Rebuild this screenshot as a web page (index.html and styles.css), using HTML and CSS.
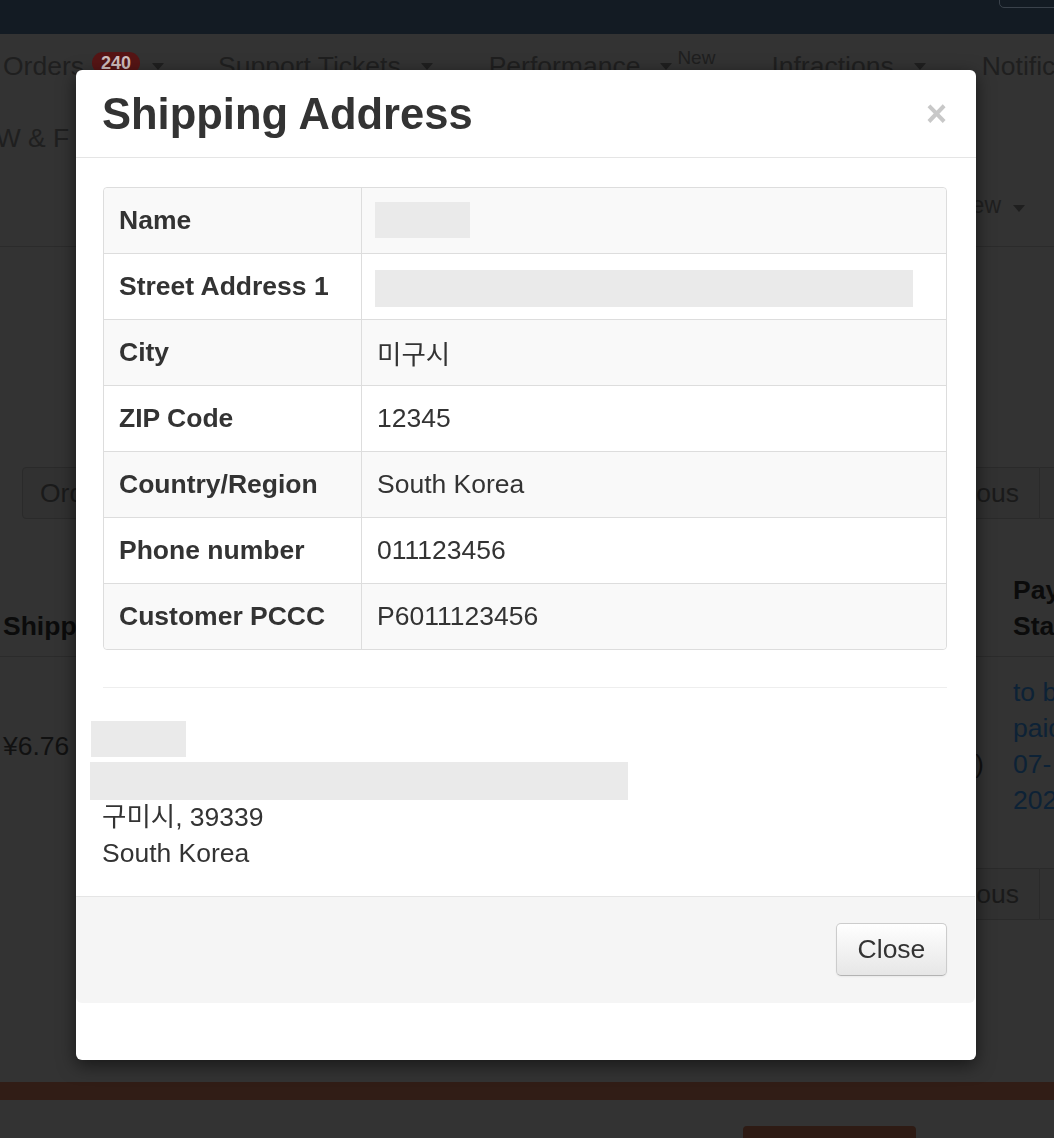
FILE: index.html
```html
<!DOCTYPE html>
<html lang="en">
<head>
<meta charset="utf-8">
<title>Shipping Address</title>
<link rel="stylesheet" href="styles.css">
</head>
<body>
<div class="page">
  <header class="topbar"><div class="search"></div></header>
  <nav class="nav">
    <div class="nav-row">
      <span class="nav-item nav-first">Orders<span class="badge">240</span><span class="caret caret-tight"></span></span>
      <span class="nav-item">Support Tickets<span class="caret"></span></span>
      <span class="nav-item">Performance<span class="caret"></span><sup class="new">New</sup></span>
      <span class="nav-item">Infractions<span class="caret"></span></span>
      <span class="nav-item">Notifications</span>
    </div>
    <div class="nav-row2">BW &amp; F</div>
    <div class="nav-row3">Overview<span class="caret"></span></div>
  </nav>
  <main class="content">
    <div class="toolbar">
      <button class="btn-dim">Orders</button>
      <div class="pager"><button class="btn-dim pg-prev">Previous</button><button class="btn-dim pg-num">1</button></div>
    </div>
    <div class="grid-head">
      <div class="col-a">Shipping Fee</div>
      <div class="col-b"></div>
      <div class="col-c"></div>
      <div class="col-d">Payment<br>Status</div>
    </div>
    <div class="grid-row">
      <div class="col-a">¥6.76</div>
      <div class="col-b"></div>
      <div class="col-c paren">)</div>
      <div class="col-d links">to be<br>paid<br>07-<br>2023</div>
    </div>
    <div class="toolbar toolbar-end">
      <div class="pager"><button class="btn-dim pg-prev">Previous</button><button class="btn-dim pg-num">1</button></div>
    </div>
    <div class="orange-bar"></div>
    <div class="brown-btn"></div>
  </main>
</div>

<div class="modal" role="dialog" aria-labelledby="modal-title">
  <div class="modal-header">
    <h2 id="modal-title">Shipping Address</h2>
    <span class="close">×</span>
  </div>
  <div class="modal-body">
    <table class="addr-table">
      <tbody>
        <tr><th>Name</th><td><span class="redact redact-name"></span></td></tr>
        <tr><th>Street Address 1</th><td><span class="redact redact-street"></span></td></tr>
        <tr><th>City</th><td>미구시</td></tr>
        <tr><th>ZIP Code</th><td>12345</td></tr>
        <tr><th>Country/Region</th><td>South Korea</td></tr>
        <tr><th>Phone number</th><td>011123456</td></tr>
        <tr><th>Customer PCCC</th><td>P6011123456</td></tr>
      </tbody>
    </table>
    <hr class="divider">
    <div class="addr">
      <div class="addr-line"><span class="redact redact-a1"></span></div>
      <div class="addr-line"><span class="redact redact-a2"></span></div>
      <div class="addr-line">구미시, 39339</div>
      <div class="addr-line">South Korea</div>
    </div>
  </div>
  <div class="modal-footer">
    <button class="btn-close">Close</button>
  </div>
</div>
</body>
</html>
```

FILE: styles.css
```css
html, body {
  margin: 0;
  padding: 0;
}
body {
  background: #333333;
  font-family: "Liberation Sans", "Noto Sans CJK KR", Arial, sans-serif;
  font-size: 26.5px;
  color: #0b0b0b;
  overflow: hidden;
  height: 1138px;
  width: 1054px;
}

/* ---------- dimmed background page ---------- */
.topbar {
  height: 34px;
  background: #131b23;
  display: flex;
  justify-content: flex-end;
  overflow: hidden;
}
.search {
  width: 77px;
  height: 26px;
  margin-top: -20px;
  margin-right: -24px;
  border: 1px solid #3a424b;
  border-radius: 5px;
  flex: none;
}
.nav {
  border-bottom: 1px solid #2b2b2b;
  color: #1f1f1f;
}
.nav-row {
  display: flex;
  align-items: center;
  height: 64px;
  padding-left: 3px;
  white-space: nowrap;
}
.nav-item {
  display: flex;
  align-items: center;
  margin-right: 56px;
  flex: none;
  height: 100%;
}
.nav-first {
  margin-right: 54px;
}
.badge {
  margin-left: 8px;
  background: #561515;
  color: #cdbdbd;
  font-size: 18px;
  font-weight: 700;
  height: 22px;
  line-height: 22px;
  padding: 0 9px;
  border-radius: 11px;
  margin-top: -6px;
}
.caret {
  display: inline-block;
  width: 0;
  height: 0;
  border-top: 7px solid #1f1f1f;
  border-left: 6px solid transparent;
  border-right: 6px solid transparent;
  margin-left: 20px;
}
.caret-tight {
  margin-left: 12px;
}
.new {
  font-size: 19px;
  align-self: flex-start;
  margin-top: 14px;
  margin-left: 5px;
  line-height: 1;
  vertical-align: top;
}
.nav-row2 {
  height: 80px;
  line-height: 80px;
  margin-left: -22px;
  white-space: nowrap;
}
.nav-row3 {
  height: 68px;
  display: flex;
  align-items: center;
  justify-content: flex-end;
  padding: 0 29px 14px 0;
  box-sizing: border-box;
  font-size: 23px;
}
.nav-row3 .caret {
  margin-left: 12px;
  margin-top: 6px;
}

.content {
  display: flex;
  flex-direction: column;
}
.toolbar {
  margin-top: 220px;
  display: flex;
  justify-content: space-between;
  padding-left: 22px;
  height: 52px;
}
.toolbar-end {
  margin-top: 33px;
  justify-content: flex-end;
}
.btn-dim {
  font: inherit;
  color: #1a1a1a;
  background: #313131;
  border: 1px solid #2a2a2a;
  border-radius: 4px;
  padding: 0 17px;
  height: 52px;
}
.pager {
  display: flex;
  margin-right: -40px;
}
.pg-prev {
  padding: 0 20px;
  border-radius: 4px 0 0 4px;
}
.pg-num {
  width: 54px;
  border-left: none;
  border-radius: 0;
}
.grid-head,
.grid-row {
  display: grid;
  grid-template-columns: 300px 672px 38px 1fr;
  padding-left: 3px;
  white-space: nowrap;
}
.grid-head {
  margin-top: 53px;
  font-weight: 700;
  line-height: 36px;
  align-items: end;
  padding-bottom: 12px;
  border-bottom: 1px solid #2b2b2b;
}
.grid-row {
  line-height: 36px;
  padding: 17px 0 17px 3px;
  align-items: center;
  color: #111;
}
.paren {
  padding-top: 36px;
}
.links {
  color: #0d2236;
}
.orange-bar {
  margin-top: 162px;
  height: 18px;
  background: #311d16;
}
.brown-btn {
  margin: 26px 0 0 743px;
  width: 173px;
  height: 40px;
  background: #2e1b14;
  border-radius: 4px;
}

/* ---------- modal ---------- */
.modal {
  position: fixed;
  top: 70px;
  left: 76px;
  width: 900px;
  height: 990px;
  background: #fff;
  border-radius: 6px;
  box-shadow: 0 5px 18px rgba(0, 0, 0, 0.55);
  display: flex;
  flex-direction: column;
  color: #333;
}
.modal-header {
  height: 84px;
  border-bottom: 1px solid #e5e5e5;
  display: flex;
  align-items: center;
  justify-content: space-between;
  padding: 3px 29px 0 26px;
  flex: none;
}
.modal-header h2 {
  margin: 0;
  font-size: 43.5px;
  line-height: 1;
  font-weight: 700;
  color: #333;
}
.close {
  font-size: 36px;
  font-weight: 700;
  line-height: 1;
  color: #c8c8c8;
  margin-top: -2px;
}
.modal-body {
  padding: 29px 29px 25px 27px;
  flex: none;
}
.addr-table {
  width: 844px;
  border-collapse: separate;
  border-spacing: 0;
  border: 1px solid #dddddd;
  border-radius: 4px;
  table-layout: fixed;
}
.addr-table th,
.addr-table td {
  height: 65px;
  padding: 0 16px;
  vertical-align: middle;
  text-align: left;
  white-space: nowrap;
  color: #333;
}
.addr-table th {
  width: 257px;
  box-sizing: border-box;
  font-weight: 700;
  padding-left: 15px;
}
.addr-table td {
  border-left: 1px solid #dddddd;
  padding-left: 15px;
}
.addr-table tr + tr th,
.addr-table tr + tr td {
  border-top: 1px solid #dddddd;
}
.addr-table tr:nth-child(odd) th,
.addr-table tr:nth-child(odd) td {
  background: #f9f9f9;
}
.addr-table tr:first-child th { border-top-left-radius: 4px; }
.addr-table tr:first-child td { border-top-right-radius: 4px; }
.addr-table tr:last-child th { border-bottom-left-radius: 4px; }
.addr-table tr:last-child td { border-bottom-right-radius: 4px; }

.redact {
  display: inline-block;
  background: #eaeaea;
  vertical-align: middle;
}
.redact-name {
  width: 95px;
  height: 36px;
  margin-left: -2px;
  margin-top: -2px;
}
.redact-street {
  width: 538px;
  height: 37px;
  margin-left: -2px;
  margin-top: 4px;
}
.divider {
  border: 0;
  border-top: 1px solid #eeeeee;
  margin: 37px 0 0;
  height: 0;
}
.addr {
  margin-top: 39px;
}
.addr-line {
  display: flow-root;
  height: 36px;
  line-height: 36px;
  white-space: nowrap;
  margin-left: -1px;
}
.redact-a1 {
  display: block;
  width: 95px;
  height: 36px;
  margin: -6px 0 0 -11px;
}
.redact-a2 {
  display: block;
  width: 538px;
  height: 38px;
  margin: -1px 0 0 -12px;
}
.modal-footer {
  border-top: 1px solid #e5e5e5;
  background: #f5f5f5;
  margin-right: 1px;
  padding: 26px 28px 27px;
  display: flex;
  justify-content: flex-end;
  border-radius: 0 0 6px 6px;
  flex: none;
}
.btn-close {
  width: 111px;
  height: 53px;
  font: inherit;
  color: #333;
  background: linear-gradient(#ffffff, #e6e6e6);
  border: 1px solid #cccccc;
  border-bottom-color: #b3b3b3;
  border-radius: 5px;
  box-shadow: inset 0 1px 0 rgba(255, 255, 255, 0.2), 0 1px 2px rgba(0, 0, 0, 0.05);
  padding: 0;
}
```
